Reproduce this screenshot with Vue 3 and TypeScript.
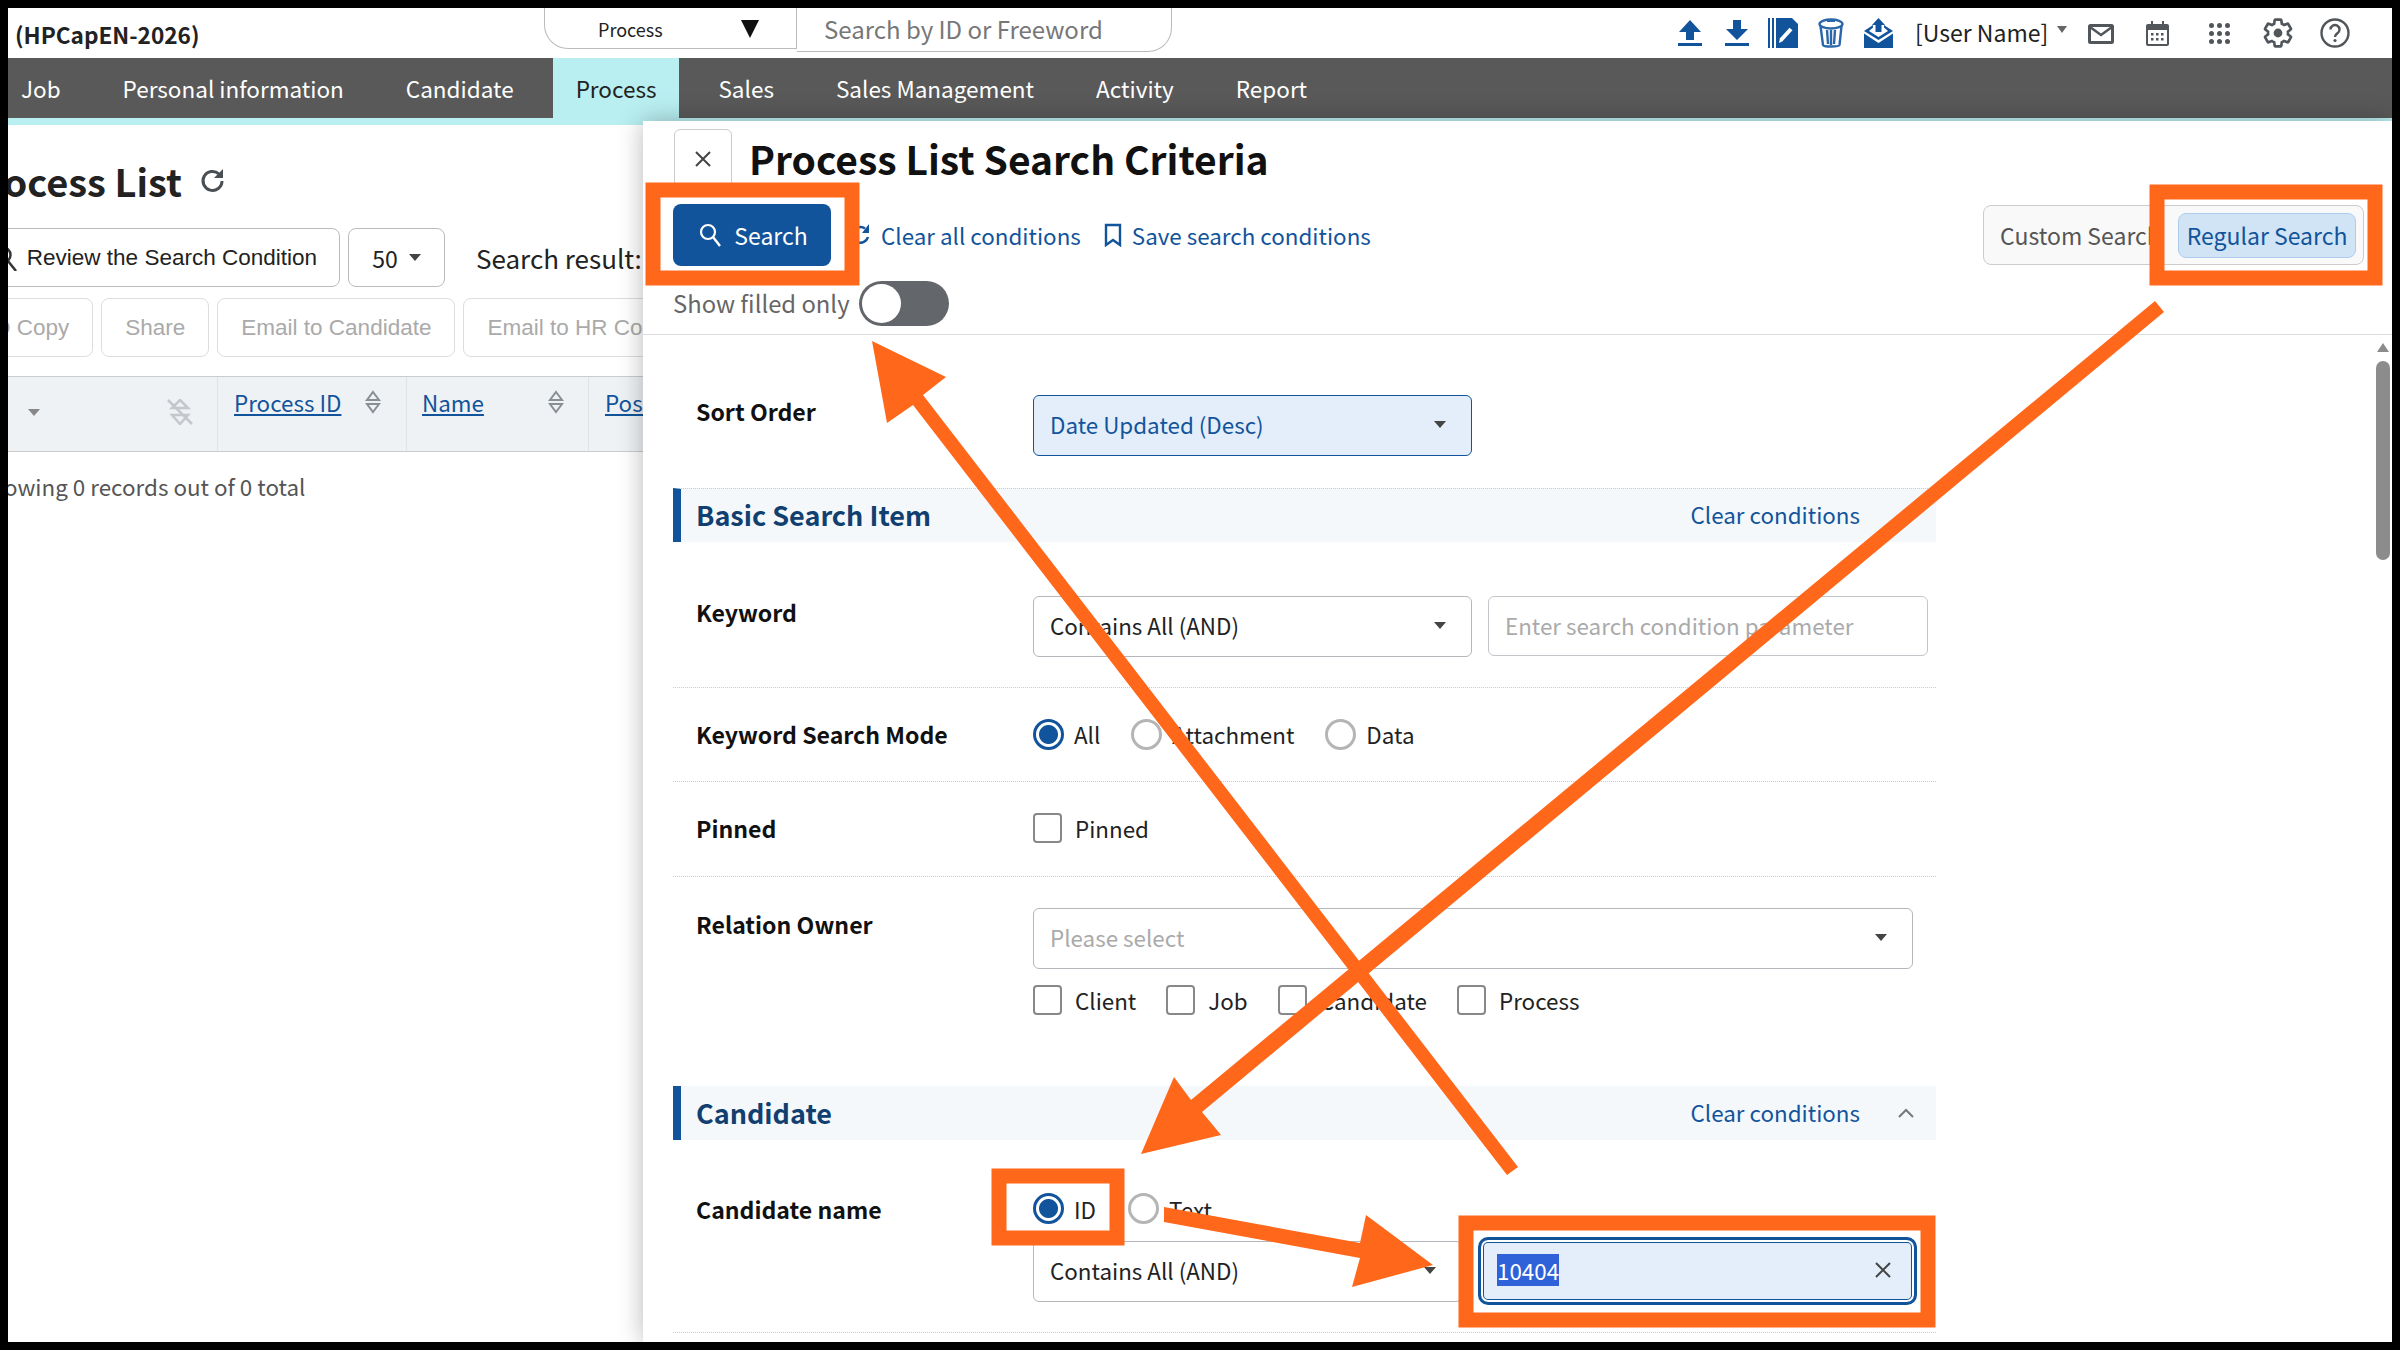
<template>
  <div class="screen">
    <div class="frame">
      <header class="top">
        <div class="brand">(HPCapEN-2026)</div>
        <div class="finder">
          <div class="finder-type"><span>Process</span><i class="big-caret"></i></div>
          <input class="finder-input" placeholder="Search by ID or Freeword" />
        </div>
        <div class="tools">
          <svg class="ic" width="24" height="26" viewBox="0 0 24 26"><path fill="#12549b" d="M12 0 23 12H16V20H8V12H1Z" /><rect y="23" width="24" height="3" fill="#12549b" /></svg>
          <svg class="ic" width="24" height="26" viewBox="0 0 24 26"><path fill="#12549b" d="M8 0H16V9H23L12 20 1 9H8Z" /><rect y="23" width="24" height="3" fill="#12549b" /></svg>
          <svg class="ic" width="30" height="30" viewBox="0 0 30 30"><path fill="#12549b" d="M0 0H2V30H0ZM4 0H6V30H4ZM8 0H24L30 6V30H8Z" /><path fill="none" stroke="#fff" stroke-width="4" d="M13 22 23 11" /><path fill="#fff" d="M11 25 12 20 15 23Z" /></svg>
          <svg class="ic" width="26" height="32" viewBox="0 0 26 32"><g fill="none" stroke="#2b67a8" stroke-width="2.4"><ellipse cx="13" cy="7" rx="11.5" ry="4.5" /><path d="M2.5 9 5 28c.3 2 16 2 16.500 0L23.500 9" /><path d="M9 13 10 27M13 13V28M17 13 16 27" /></g><path fill="#2b67a8" d="M9 2h8v3H9z" /></svg>
          <svg class="ic" width="29" height="30" viewBox="0 0 29 30"><path fill="#12549b" d="M14.500 0 21 7H17.500V14H11.500V7H8ZM9 7 0 13 14.500 22 29 13 20 7V9.500L24 13 14.500 19 5 13 9 9.500ZM0 15.500 14.500 25 29 15.500V30H0Z" /></svg>
          <div class="user">[User Name]<i class="mini-caret"></i></div>
          <svg class="gc mail" width="26" height="20" viewBox="0 0 26 20"><rect x="1.500" y="1.500" width="23" height="17" rx="1" fill="none" stroke="#51565b" stroke-width="3" /><path d="M2 3 13 11 24 3" fill="none" stroke="#51565b" stroke-width="2.500" /></svg>
          <svg class="gc cal" width="23" height="25" viewBox="0 0 23 25"><path fill="#51565b" d="M5 0H7V3H16V0H18V3H21Q23 3 23 5V23Q23 25 21 25H2Q0 25 0 23V5Q0 3 2 3H5ZM2 9V23H21V9Z" /><g fill="#51565b"><rect x="5" y="12" width="2.500" height="2.500" /><rect x="10" y="12" width="2.500" height="2.500" /><rect x="15" y="12" width="2.500" height="2.500" /><rect x="5" y="17" width="2.500" height="2.500" /><rect x="10" y="17" width="2.500" height="2.500" /><rect x="15" y="17" width="2.500" height="2.500" /></g></svg>
          <svg class="gc grid" width="21" height="21" viewBox="0 0 21 21"><g fill="#51565b"><circle v-for="d in dots" :key="d[0] + '-' + d[1]" :cx="d[0]" :cy="d[1]" r="2.500" /></g></svg>
          <svg class="gc gear" width="32" height="32" viewBox="0 0 24 24"><path fill="none" stroke="#51565b" stroke-width="2" d="M19.430 12.980c.04-.32.07-.64.07-.98 0-.34-.03-.66-.07-.98l2.110-1.650c.19-.15.24-.42.12-.64l-2-3.460c-.09-.16-.26-.25-.44-.25-.06 0-.12.01-.17.03l-2.490 1c-.52-.4-1.080-.73-1.690-.98l-.38-2.650C14.460 2.180 14.250 2 14 2h-4c-.25 0-.46.18-.49.42l-.38 2.650c-.61.25-1.170.59-1.690.98l-2.490-1c-.06-.02-.12-.03-.18-.03-.17 0-.34.09-.43.25l-2 3.460c-.13.22-.07.49.12.64l2.110 1.650c-.04.32-.07.65-.07.98 0 .33.03.66.07.98l-2.110 1.650c-.19.15-.24.42-.12.64l2 3.460c.09.16.26.25.44.25.06 0 .12-.01.17-.03l2.490-1c.52.4 1.080.73 1.690.98l.38 2.650c.03.24.24.42.49.42h4c.25 0 .46-.18.49-.42l.38-2.650c.61-.25 1.170-.59 1.690-.98l2.490 1c.06.02.12.03.18.03.17 0 .34-.09.43-.25l2-3.460c.12-.22.07-.49-.12-.64l-2.110-1.650z" /><circle cx="12" cy="12" r="3.300" fill="#51565b" /></svg>
          <svg class="gc help" width="30" height="30" viewBox="0 0 30 30"><circle cx="15" cy="15" r="13.500" fill="none" stroke="#51565b" stroke-width="2.400" /><path d="M10.500 11.500a4.500 4.500 0 1 1 6.800 3.900c-1.500.9-2.300 1.800-2.300 3.600" fill="none" stroke="#51565b" stroke-width="2.400" /><circle cx="15" cy="22.500" r="1.600" fill="#51565b" /></svg>
        </div>
      </header>

      <nav class="menu">
        <a v-for="item in menu" :key="item" :class="{ on: item === 'Process' }" href="#">{{ item }}</a>
      </nav>

      <main class="list">
        <div class="list-title">
          <h1>Process List</h1>
          <svg width="26" height="26" viewBox="0 0 26 26"><path d="M22 13a9.500 9.500 0 1 1-3-7" fill="none" stroke="#4a4f54" stroke-width="3" /><path d="M23 1V10H14Z" fill="#4a4f54" /></svg>
        </div>
        <div class="list-search">
          <button class="plain review">
            <svg width="26" height="26" viewBox="0 0 26 26"><circle cx="10" cy="10" r="7.500" fill="none" stroke="#333" stroke-width="2.500" /><path d="M15 16 23 26" stroke="#333" stroke-width="2.500" /></svg>
            Review the Search Condition
          </button>
          <button class="plain count">50<i class="mini-caret dark"></i></button>
          <span class="result">Search result:</span>
        </div>
        <div class="list-actions">
          <button class="off">ID Copy</button>
          <button class="off">Share</button>
          <button class="off">Email to Candidate</button>
          <button class="off">Email to HR Consultant</button>
        </div>
        <div class="thead">
          <div class="th th-check">
            <i class="mini-caret gray"></i>
            <svg width="26" height="26" viewBox="0 0 26 26"><path d="M13 1 21 9H5ZM5 16H21L13 25ZM1 1 25 25" fill="none" stroke="#c4c8cc" stroke-width="2.500" /></svg>
          </div>
          <div class="th th-id"><a href="#">Process ID</a><svg class="sort" width="16" height="24" viewBox="0 0 16 24"><path d="M8 2 14 10H2ZM8 22 14 14H2Z" fill="none" stroke="#8a8f94" stroke-width="2" /></svg></div>
          <div class="th th-name"><a href="#">Name</a><svg class="sort" width="16" height="24" viewBox="0 0 16 24"><path d="M8 2 14 10H2ZM8 22 14 14H2Z" fill="none" stroke="#8a8f94" stroke-width="2" /></svg></div>
          <div class="th th-pos"><a href="#">Position</a></div>
        </div>
        <p class="empty">Showing 0 records out of 0 total</p>
      </main>

      <aside class="drawer">
        <div class="drawer-head">
          <button class="close">
            <svg width="18" height="18" viewBox="0 0 18 18"><path d="M2 2 16 16M16 2 2 16" stroke="#444" stroke-width="2" /></svg>
          </button>
          <h2>Process List Search Criteria</h2>
        </div>
        <div class="drawer-tools">
          <button class="go">
            <svg width="22" height="24" viewBox="0 0 22 24"><circle cx="9" cy="9" r="7" fill="none" stroke="#fff" stroke-width="2.200" /><path d="M14 14 21 23" stroke="#fff" stroke-width="2.400" /></svg>
            Search
          </button>
          <a class="tool-link first" href="#">
            <svg width="20" height="24" viewBox="0 0 20 24"><path d="M17 14a7.800 7.800 0 1 1-3-8.500" fill="none" stroke="#12549b" stroke-width="2.600" /><path d="M18 1V10H11Z" fill="#12549b" /></svg>
            Clear all conditions
          </a>
          <a class="tool-link" href="#">
            <svg width="18" height="24" viewBox="0 0 18 24"><path d="M2 2H16V22L9 17 2 22Z" fill="none" stroke="#12549b" stroke-width="2.400" /></svg>
            Save search conditions
          </a>
          <div class="mode-switch">
            <span>Custom Search</span>
            <b>Regular Search</b>
          </div>
        </div>
        <div class="filled">
          <span>Show filled only</span>
          <div class="toggle"><i></i></div>
        </div>

        <div class="form">
          <div class="row row-sort">
            <label>Sort Order</label>
            <div class="sel sel-short sel-on">Date Updated (Desc)<i class="mini-caret dark"></i></div>
          </div>

          <div class="sec sec-basic">
            <h3>Basic Search Item</h3>
            <a href="#">Clear conditions</a>
          </div>
          <div class="row row-keyword line">
            <label>Keyword</label>
            <div class="pair">
              <div class="sel sel-short">Contains All (AND)<i class="mini-caret dark"></i></div>
              <input class="txt" placeholder="Enter search condition parameter" />
            </div>
          </div>
          <div class="row row-mode line">
            <label>Keyword Search Mode</label>
            <div class="opts">
              <span class="opt"><i class="radio on"></i>All</span>
              <span class="opt"><i class="radio"></i>Attachment</span>
              <span class="opt"><i class="radio"></i>Data</span>
            </div>
          </div>
          <div class="row row-pinned line">
            <label>Pinned</label>
            <div class="opts"><span class="opt"><i class="check"></i>Pinned</span></div>
          </div>
          <div class="row row-owner">
            <label>Relation Owner</label>
            <div>
              <div class="sel sel-wide empty-sel">Please select<i class="mini-caret dark"></i></div>
              <div class="opts owners">
                <span v-for="o in owners" :key="o" class="opt"><i class="check"></i>{{ o }}</span>
              </div>
            </div>
          </div>

          <div class="sec sec-cand">
            <h3>Candidate</h3>
            <a href="#">Clear conditions</a>
            <svg class="chev" width="16" height="10" viewBox="0 0 16 10"><path d="M1 9 8 2 15 9" fill="none" stroke="#777" stroke-width="2" /></svg>
          </div>
          <div class="row row-cand line">
            <label>Candidate name</label>
            <div>
              <div class="opts cand-opts">
                <span class="opt"><i class="radio on"></i>ID</span>
                <span class="opt"><i class="radio"></i>Text</span>
              </div>
              <div class="pair cand-pair">
                <div class="sel sel-cand">Contains All (AND)<i class="mini-caret dark"></i></div>
                <div class="typed">
                  <span class="picked">10404</span>
                  <svg width="16" height="16" viewBox="0 0 16 16"><path d="M1 1 15 15M15 1 1 15" stroke="#444" stroke-width="2" /></svg>
                </div>
              </div>
            </div>
          </div>
        </div>

        <div class="scroll">
          <i class="scroll-up"></i>
          <i class="scroll-thumb"></i>
        </div>
      </aside>
    </div>

    <svg class="marks" width="2400" height="1350" viewBox="0 0 2400 1350">
      <g fill="none" stroke="#ff671a" stroke-width="15">
        <rect x="653" y="190" width="199" height="88" />
        <rect x="2157" y="192" width="218" height="86" />
        <rect x="999" y="1176" width="118" height="62" />
        <rect x="1466" y="1223" width="462" height="97" />
      </g>
      <g fill="#ff671a">
        <path d="M2155 301 2164 312 1202 1112 1221 1135 1141 1154 1174 1077 1191 1100Z" />
        <path d="M872 341 946 377 923 395 1518 1167 1507 1175 913 405 887 423Z" />
        <path d="M1164 1207 1360 1243 1366 1215 1433 1265 1352 1287 1360 1258 1164 1222Z" />
      </g>
    </svg>
  </div>
</template>

<script setup lang="ts">
const menu: string[] = ['Job', 'Personal information', 'Candidate', 'Process', 'Sales', 'Sales Management', 'Activity', 'Report']
const owners: string[] = ['Client', 'Job', 'Candidate', 'Process']
const dots: number[][] = [2.5, 10.5, 18.5].flatMap((y) => [2.5, 10.5, 18.5].map((x) => [x, y]))
</script>

<style>
html,
body {
  margin: 0;
  background: #000;
}
</style>

<style scoped>
.screen {
  position: relative;
  width: 2400px;
  height: 1350px;
  padding: 8px;
  box-sizing: border-box;
  background: #000;
  overflow: hidden;
  font-family: "Noto Sans CJK JP", "Noto Sans", sans-serif;
  color: #222;
}
.frame {
  position: relative;
  height: 1334px;
  background: #fff;
  overflow: hidden;
}
.marks {
  position: absolute;
  left: 0;
  top: 0;
  pointer-events: none;
}
button {
  font-family: inherit;
}
a {
  text-decoration: none;
}

.top {
  display: flex;
  height: 50px;
}
.brand {
  width: 536px;
  padding: 12px 0 0 7px;
  box-sizing: border-box;
  font-size: 22.6px;
  line-height: 30px;
  font-weight: 700;
}
.finder {
  display: flex;
  width: 628px;
}
.finder-type {
  display: flex;
  align-items: center;
  width: 253px;
  height: 41px;
  box-sizing: border-box;
  padding: 2px 37px 0 53px;
  justify-content: space-between;
  border: 1px solid #bbb;
  border-top: 0;
  border-radius: 0 0 0 24px;
  font-size: 18px;
}
.big-caret {
  width: 0;
  height: 0;
  border-left: 9px solid transparent;
  border-right: 9px solid transparent;
  border-top: 18px solid #111;
}
.finder-input {
  flex: 1;
  height: 44px;
  box-sizing: border-box;
  border: 1px solid #bbb;
  border-top: 0;
  border-left: 0;
  border-radius: 0 0 24px 0;
  padding: 0 0 2px 27px;
  font-family: inherit;
  font-size: 24px;
  outline: none;
  background: #fff;
}
.finder-input::placeholder {
  color: #777;
}
.tools {
  display: flex;
  align-items: center;
  padding-left: 506px;
  height: 50px;
}
.ic {
  flex: none;
  margin-right: 23px;
}
.ic:nth-child(2) {
  margin-right: 19px;
}
.ic:nth-child(3),
.ic:nth-child(4) {
  margin-right: 20px;
}
.ic:nth-child(5) {
  margin-right: 22px;
}
.user {
  display: flex;
  white-space: nowrap;
  font-size: 23px;
  margin: 0 21px 2px 0;
}
.mini-caret {
  display: inline-block;
  width: 0;
  height: 0;
  border-left: 6px solid transparent;
  border-right: 6px solid transparent;
  border-top: 7px solid #666;
}
.user .mini-caret {
  border-left-width: 5px;
  border-right-width: 5px;
  margin: 11px 0 0 9px;
}
.mini-caret.dark {
  border-top-color: #444;
}
.mini-caret.gray {
  border-top-color: #888;
}
.gc {
  flex: none;
}
.mail {
  margin: 2px 32px 0 0;
}
.cal {
  margin-right: 40px;
}
.grid {
  margin-right: 32px;
}
.gear {
  margin-right: 26px;
}

.menu {
  display: flex;
  height: 60px;
  margin-left: -18px;
  background: #595959;
  border-bottom: 7px solid #b9eff1;
}
.menu a {
  margin: 0 8px;
  padding: 0 23px;
  font-size: 22.5px;
  line-height: 60px;
  color: #fff;
  white-space: nowrap;
}
.menu a.on {
  background: #b9eff1;
  color: #222;
}

.list h1 {
  margin: 0;
  font-size: 38px;
  line-height: 56px;
  font-weight: 700;
}
.list-title {
  display: flex;
  align-items: center;
  gap: 18px;
  margin: 28px 0 0 -46px;
}
.list-search {
  display: flex;
  align-items: center;
  gap: 8px;
  margin: 19px 0 0 -31px;
  height: 59px;
}
.plain {
  display: flex;
  align-items: center;
  height: 59px;
  background: #fff;
  border: 1px solid #bbb;
  border-radius: 8px;
  font-family: "Liberation Sans", Arial, sans-serif;
  font-size: 22.5px;
  color: #222;
}
.review {
  justify-content: flex-end;
  gap: 8px;
  width: 363px;
  padding: 0 22px 0 0;
}
.count {
  justify-content: center;
  gap: 11px;
  width: 97px;
  font-family: inherit;
  font-size: 23px;
}
.result {
  margin-left: 23px;
  font-size: 26px;
  white-space: nowrap;
}
.list-actions {
  display: flex;
  gap: 8px;
  margin: 11px 0 0 -44px;
}
.off {
  height: 59px;
  padding: 0 23px;
  background: #fff;
  border: 1px solid #ddd;
  border-radius: 8px;
  font-family: "Liberation Sans", Arial, sans-serif;
  font-size: 22.5px;
  color: #aaa;
  white-space: nowrap;
}
.thead {
  display: flex;
  height: 76px;
  margin-top: 19px;
  background: #eff2f5;
  border-top: 1px solid #ccc;
  border-bottom: 1px solid #ccc;
  box-sizing: border-box;
}
.th {
  display: flex;
  padding-top: 9px;
  box-sizing: border-box;
  border-right: 1px solid #dfe2e6;
  font-size: 22.4px;
}
.th a {
  color: #12549b;
  text-decoration: underline;
  line-height: 32px;
  white-space: nowrap;
}
.th-check {
  width: 210px;
  justify-content: space-between;
  padding: 22px 24px 0 20px;
}
.th-check .mini-caret {
  margin-top: 10px;
}
.th-id {
  width: 189px;
  padding-left: 16px;
}
.th-id .sort {
  margin-left: 24px;
  margin-top: 4px;
}
.th-name {
  width: 182px;
  padding-left: 15px;
}
.th-name .sort {
  margin-left: 64px;
  margin-top: 4px;
}
.th-pos {
  padding-left: 16px;
  border-right: 0;
}
.empty {
  margin: 18px 0 0 -31px;
  font-size: 22.4px;
  line-height: 32px;
  color: #555;
  white-space: nowrap;
}

.drawer {
  position: absolute;
  left: 635px;
  top: 113px;
  right: 0;
  bottom: 0;
  background: #fff;
  box-shadow: 0 0 24px rgba(0, 0, 0, 0.28);
}
.drawer-head {
  display: flex;
  align-items: center;
  gap: 17px;
  padding: 8px 0 0 31px;
}
.close {
  display: flex;
  align-items: center;
  justify-content: center;
  width: 58px;
  height: 59px;
  padding: 0;
  background: #fff;
  border: 1px solid #ccc;
  border-radius: 6px;
}
.drawer-head h2 {
  margin: 0 0 2px;
  font-size: 39px;
  line-height: 54px;
  font-weight: 700;
  color: #111;
  white-space: nowrap;
}
.drawer-tools {
  display: flex;
  align-items: center;
  height: 62px;
  margin-top: 16px;
  padding: 0 28px 0 30px;
}
.go {
  display: flex;
  align-items: center;
  justify-content: center;
  gap: 13px;
  width: 158px;
  height: 62px;
  padding: 0 0 0 3px;
  background: #12549b;
  border: 0;
  border-radius: 8px;
  color: #fff;
  font-size: 23px;
}
.tool-link {
  display: flex;
  align-items: center;
  gap: 10px;
  color: #12549b;
  font-size: 22.4px;
  white-space: nowrap;
  margin-left: 23px;
}
.tool-link.first {
  margin-left: 20px;
}
.mode-switch {
  display: flex;
  align-items: center;
  justify-content: space-between;
  width: 381px;
  height: 60px;
  box-sizing: border-box;
  margin-left: auto;
  padding: 0 7px 0 16px;
  background: #f9f9f9;
  border: 1px solid #ccc;
  border-radius: 8px;
  font-size: 23px;
  color: #555;
  white-space: nowrap;
}
.mode-switch b {
  width: 178px;
  height: 45px;
  line-height: 43px;
  box-sizing: border-box;
  text-align: center;
  font-weight: 400;
  color: #12549b;
  background: #d1e4f6;
  border: 1px solid #aecdee;
  border-radius: 8px;
}
.filled {
  display: flex;
  align-items: center;
  gap: 9px;
  height: 45px;
  margin-top: 15px;
  padding: 0 0 8px 30px;
  border-bottom: 1px solid #ddd;
  font-size: 23.8px;
  color: #666;
}
.filled span {
  margin-bottom: 2px;
}
.toggle {
  width: 90px;
  height: 45px;
  box-sizing: border-box;
  padding: 3px;
  border-radius: 23px;
  background: #63676b;
}
.toggle i {
  display: block;
  width: 39px;
  height: 39px;
  border-radius: 50%;
  background: #fff;
}

.form {
  width: 1263px;
  margin-left: 30px;
}
.row {
  display: grid;
  grid-template-columns: 360px 1fr;
  font-size: 22.4px;
}
.row > label {
  margin-top: -1px;
  padding-left: 23px;
  font-weight: 700;
  font-size: 23.1px;
  line-height: 34px;
  color: #111;
  white-space: nowrap;
}
.row-mode > label,
.row-pinned > label {
  margin-top: 0;
}
.line {
  border-bottom: 1px dotted #ccc;
}
.sel {
  display: flex;
  align-items: center;
  justify-content: space-between;
  height: 61px;
  box-sizing: border-box;
  padding: 0 25px 3px 16px;
  background: #fff;
  border: 1px solid #b4b8bc;
  border-radius: 6px;
  font-size: 22.4px;
  white-space: nowrap;
}
.sel-short {
  width: 439px;
}
.sel-wide {
  width: 880px;
}
.sel-cand {
  width: 429px;
}
.sel-on {
  background: #e3eefa;
  border-color: #12549b;
  color: #12549b;
}
.empty-sel {
  color: #aaa;
}
.row-sort {
  padding-top: 60px;
  height: 153px;
  box-sizing: border-box;
}
.sec {
  position: relative;
  display: flex;
  align-items: center;
  justify-content: space-between;
  height: 54px;
  box-sizing: border-box;
  padding: 0 76px 2px 15px;
  background: #f4f8fb;
  border-left: 8px solid #12549b;
}
.sec-basic {
  padding-bottom: 3px;
  border-top: 1px dotted #ccc;
}
.sec h3 {
  margin: 0;
  font-size: 27px;
  font-weight: 700;
  color: #103f70;
}
.sec a {
  font-size: 22.4px;
  color: #12549b;
}
.chev {
  position: absolute;
  right: 22px;
  top: 22px;
}
.row-keyword {
  height: 146px;
  box-sizing: border-box;
  padding-top: 54px;
}
.pair {
  display: flex;
  gap: 16px;
  align-items: flex-start;
}
.txt {
  width: 440px;
  height: 60px;
  box-sizing: border-box;
  padding: 0 16px 2px 16px;
  border: 1px solid #c2c6ca;
  border-radius: 6px;
  font-family: inherit;
  font-size: 22.4px;
  outline: none;
}
.txt::placeholder {
  color: #aaa;
}
.opts {
  display: flex;
  align-items: center;
}
.opt {
  display: flex;
  align-items: center;
  gap: 10px;
  white-space: nowrap;
  line-height: 32px;
}
.radio {
  width: 31px;
  height: 31px;
  box-sizing: border-box;
  border: 3px solid #b5b5b5;
  border-radius: 50%;
  background: #fff;
}
.radio.on {
  border-color: #12549b;
  background: radial-gradient(circle, #12549b 0 9px, #fff 10px);
}
.check {
  width: 29px;
  height: 30px;
  box-sizing: border-box;
  border: 2px solid #888;
  border-radius: 4px;
  background: #fff;
  margin-right: 3px;
}
.row-mode {
  height: 94px;
  box-sizing: border-box;
  align-items: center;
  padding-bottom: 1px;
}
.row-mode .opts {
  gap: 31px;
}
.row-pinned {
  height: 95px;
  box-sizing: border-box;
  align-items: center;
  padding-bottom: 2px;
}
.row-owner {
  height: 209px;
  box-sizing: border-box;
  padding-top: 31px;
}
.owners {
  gap: 30px;
  margin-top: 15px;
}
.row-cand {
  height: 193px;
  box-sizing: border-box;
  padding-top: 53px;
}
.cand-opts {
  gap: 32px;
  height: 31px;
}
.cand-pair {
  align-items: center;
  margin-top: 14px;
}
.typed {
  display: flex;
  align-items: center;
  justify-content: space-between;
  width: 439px;
  height: 68px;
  box-sizing: border-box;
  margin-top: -1px;
  padding: 0 23px 2px 16px;
  background: #e3eefa;
  border: 3px solid #12549b;
  box-shadow: inset 0 0 0 2px #fff, inset 0 0 0 3px #12549b;
  border-radius: 10px;
}
.picked {
  background: #2f62d8;
  color: #fff;
  font-size: 22.4px;
  line-height: 32px;
}
.scroll {
  position: absolute;
  right: 2px;
  top: 222px;
  width: 14px;
}
.scroll-up {
  display: block;
  width: 0;
  height: 0;
  margin: 0 auto 9px;
  border-left: 6px solid transparent;
  border-right: 6px solid transparent;
  border-bottom: 9px solid #8c8c8c;
}
.scroll-thumb {
  display: block;
  height: 199px;
  border-radius: 7px;
  background: #8c8c8c;
}
</style>
